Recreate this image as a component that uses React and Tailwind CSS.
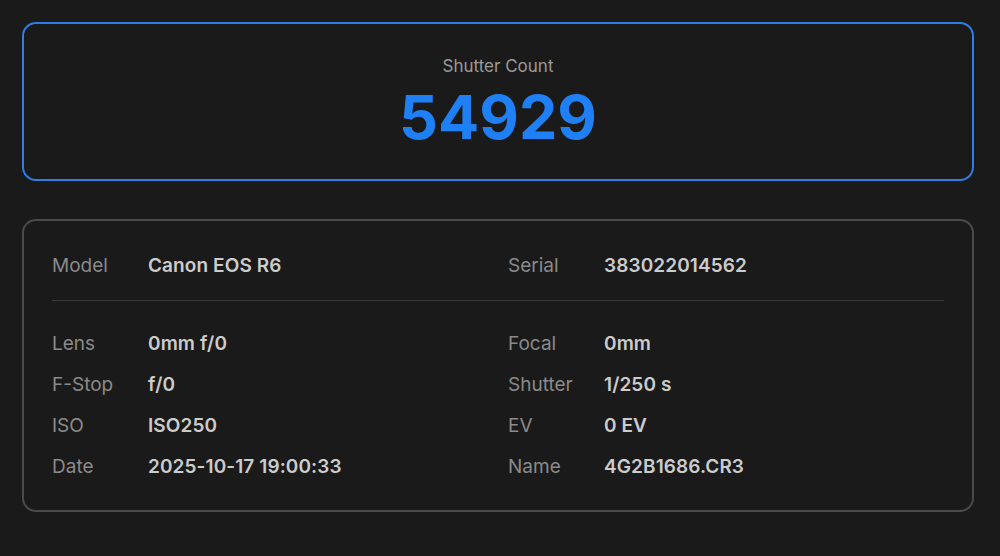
export default function App() {
  const left = [
    ["Lens", "0mm f/0"],
    ["F-Stop", "f/0"],
    ["ISO", "ISO250"],
    ["Date", "2025-10-17 19:00:33"],
  ];
  const right = [
    ["Focal", "0mm"],
    ["Shutter", "1/250 s"],
    ["EV", "0 EV"],
    ["Name", "4G2B1686.CR3"],
  ];
  const Row = ({ label, value }) => (
    <div className="flex h-[41px] items-center">
      <div className="w-[96px] text-[19px] text-[#8a8a8a]">{label}</div>
      <div className="text-[19px] font-semibold tracking-[0.1px] text-[#cccccc]">{value}</div>
    </div>
  );
  return (
    <div
      className="min-h-[556px] w-full bg-[#1a1a1a] pt-[22px]"
      style={{ fontFamily: "Inter, 'Liberation Sans', sans-serif" }}
    >
      <div className="ml-[22px] w-[952px]">
        <div className="flex h-[159px] flex-col items-center rounded-[14px] border-2 border-[#2f7de6] pt-[30px]">
          <div className="text-[17px] leading-[24px] text-[#9a9a9a]">Shutter Count</div>
          <div className="mt-[6px] text-[61px] font-bold leading-[66px] text-[#1f80f5]">54929</div>
        </div>
        <div className="mt-[38px] rounded-[14px] border-2 border-[#4a4a4a] px-[28px] pt-[25px] pb-[22px]">
          <div className="grid grid-cols-2 gap-x-[20px]">
            <Row label="Model" value="Canon EOS R6" />
            <Row label="Serial" value="383022014562" />
          </div>
          <div className="mt-[13px] mb-[23px] h-px bg-[#3a3a3a]" />
          <div className="grid grid-cols-2 gap-x-[20px]">
            <div className="flex flex-col">
              {left.map(([l, v]) => (
                <Row key={l} label={l} value={v} />
              ))}
            </div>
            <div className="flex flex-col">
              {right.map(([l, v]) => (
                <Row key={l} label={l} value={v} />
              ))}
            </div>
          </div>
        </div>
      </div>
    </div>
  );
}
